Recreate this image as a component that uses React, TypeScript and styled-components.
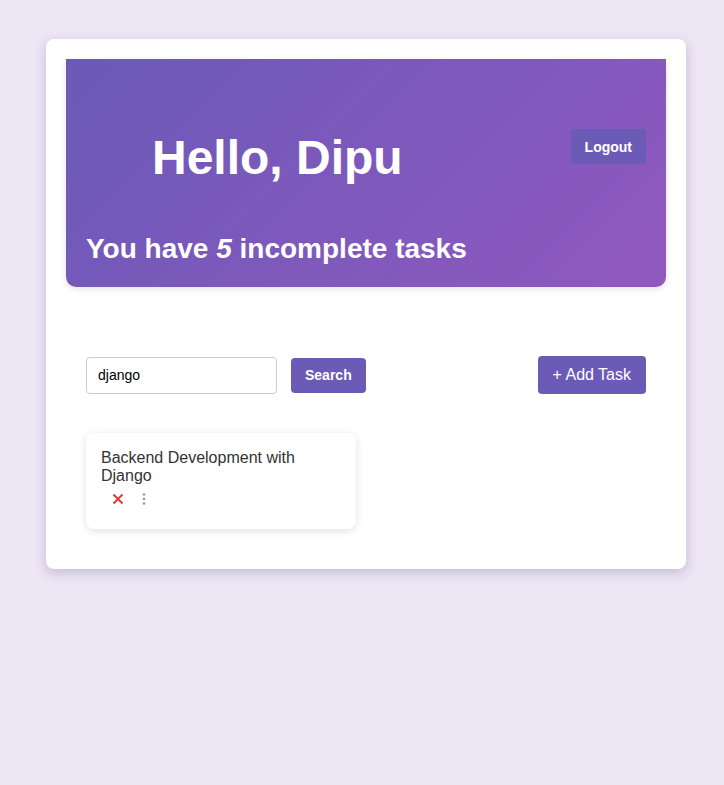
import styled, { createGlobalStyle } from "styled-components";

const GlobalStyle = createGlobalStyle`
  body {
    margin: 0;
    background-color: #ede6f5;
    font-family: "Liberation Sans", Arial, sans-serif;
  }
`;

const Page = styled.div`
  padding: 39px 38px 60px 46px;
`;

const Container = styled.div`
  width: 600px;
  padding: 20px;
  background-color: white;
  border-radius: 8px;
  box-shadow: 0 4px 12px rgba(80, 60, 120, 0.25);
`;

const Header = styled.div`
  display: flex;
  flex-direction: column;
  padding: 70px 20px 22px 20px;
  background-image: linear-gradient(135deg, #6a5ab8 0%, #9158bf 100%);
  border-radius: 0 0 10px 10px;
  box-shadow: 0 2px 6px rgba(0, 0, 0, 0.12);
  color: white;
`;

const TopRow = styled.div`
  display: flex;
  justify-content: space-between;
  align-items: flex-start;
`;

const Greeting = styled.h1`
  margin: 1px 0 0 66px;
  font-size: 48px;
  line-height: 55px;
  font-weight: bold;
`;

const Button = styled.button<{ $big?: boolean }>`
  height: ${(p) => (p.$big ? "38px" : "35px")};
  padding: 0 ${(p) => (p.$big ? "15px" : "14px")};
  border: none;
  border-radius: 4px;
  background-color: #6b5bb6;
  color: white;
  font-family: "Liberation Sans", Arial, sans-serif;
  font-size: ${(p) => (p.$big ? "16px" : "14px")};
  font-weight: ${(p) => (p.$big ? "normal" : "bold")};
  cursor: pointer;
`;

const Summary = styled.h2`
  margin: 48px 0 0 0;
  font-size: 28px;
  line-height: 32px;
  font-weight: bold;
`;

const Toolbar = styled.div`
  display: flex;
  align-items: center;
  justify-content: space-between;
  margin-top: 69px;
  padding: 0 20px;
`;

const SearchForm = styled.div`
  display: flex;
  align-items: center;
  gap: 14px;
`;

const SearchInput = styled.input`
  box-sizing: border-box;
  width: 191px;
  height: 37px;
  padding: 0 11px;
  border: 1px solid #ccc;
  border-radius: 4px;
  font-family: "Liberation Sans", Arial, sans-serif;
  font-size: 14px;
  color: #000;
  outline: none;
`;

const TaskList = styled.div`
  display: grid;
  grid-template-columns: 270px;
  margin-top: 39px;
  padding: 0 20px 20px;
`;

const TaskCard = styled.div`
  padding: 16px 15px 23px;
  border-radius: 8px;
  background-color: white;
  box-shadow: 0 2px 8px rgba(0, 0, 0, 0.12);
`;

const TaskTitle = styled.div`
  font-size: 16px;
  line-height: normal;
  color: #333;
`;

const Actions = styled.div`
  display: flex;
  align-items: center;
  gap: 18px;
  margin-top: 7px;
  padding-left: 11px;
`;

const IconButton = styled.span<{ $color: string }>`
  display: flex;
  align-items: center;
  color: ${(p) => p.$color};
  cursor: pointer;
`;

export default function App() {
  return (
    <>
      <GlobalStyle />
      <Page>
        <Container>
          <Header>
            <TopRow>
              <Greeting>Hello, Dipu</Greeting>
              <Button>Logout</Button>
            </TopRow>
            <Summary>
              You have <em>5</em> incomplete tasks
            </Summary>
          </Header>
          <Toolbar>
            <SearchForm>
              <SearchInput defaultValue="django" />
              <Button>Search</Button>
            </SearchForm>
            <Button $big>+ Add Task</Button>
          </Toolbar>
          <TaskList>
            <TaskCard>
              <TaskTitle>Backend Development with Django</TaskTitle>
              <Actions>
                <IconButton $color="#e53935">
                  <svg width="12" height="12" viewBox="0 0 12 12">
                    <path d="M1.5 1.5 L10.5 10.5 M10.5 1.5 L1.5 10.5" stroke="currentColor" strokeWidth="2" />
                  </svg>
                </IconButton>
                <IconButton $color="#999">
                  <svg width="4" height="14" viewBox="0 0 4 14">
                    <circle cx="2" cy="2.5" r="1.3" fill="currentColor" />
                    <circle cx="2" cy="7" r="1.3" fill="currentColor" />
                    <circle cx="2" cy="11.5" r="1.3" fill="currentColor" />
                  </svg>
                </IconButton>
              </Actions>
            </TaskCard>
          </TaskList>
        </Container>
      </Page>
    </>
  );
}
